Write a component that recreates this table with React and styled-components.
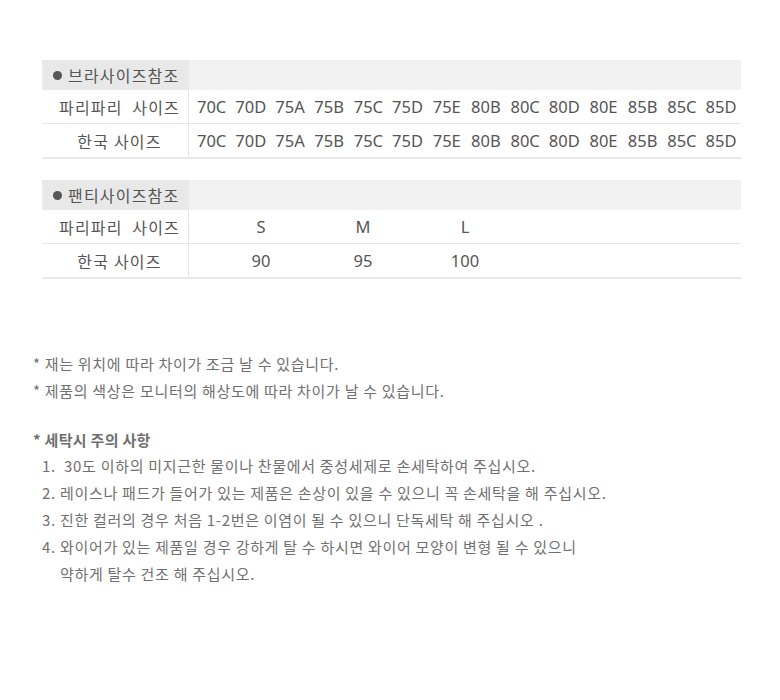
import React from "react";
import styled, { createGlobalStyle } from "styled-components";

const GlobalStyle = createGlobalStyle`
  html, body { margin: 0; padding: 0; background: #ffffff; }
  body { font-family: "Noto Sans CJK KR", "Noto Sans", sans-serif; color: #555; }
`;

const Page = styled.div`
  width: 780px;
  height: 700px;
  box-sizing: border-box;
  padding: 60px 39px 0 42px;
`;

const Table = styled.div`
  width: 699px;
  display: flex;
  flex-direction: column;
  margin-bottom: ${(p) => p.$gap || 0}px;
`;

const HeaderRow = styled.div`
  display: grid;
  grid-template-columns: 147px 1fr;
  height: 30px;
`;

const HeaderLabel = styled.div`
  background: #e8e8e8;
  display: flex;
  align-items: center;
  padding-left: 11px;
  font-size: 16px;
  letter-spacing: 1.2px;
  color: #555;
  white-space: pre;
`;

const Dot = styled.span`
  display: inline-block;
  width: 9px;
  height: 9px;
  border-radius: 50%;
  background: #555;
  margin-right: 6px;
`;

const HeaderFill = styled.div`
  background: #f1f1f1;
`;

const Row = styled.div`
  display: grid;
  grid-template-columns: 147px 1fr;
  height: 33px;
  border-bottom: ${(p) => (p.$last ? "2px solid #e9e9e9" : "1px solid #e6e6e6")};
`;

const Label = styled.div`
  display: flex;
  align-items: center;
  justify-content: center;
  padding-left: 9px;
  font-size: 16px;
  letter-spacing: 1.2px;
  color: #555;
  white-space: pre;
  border-right: 1px solid #e4e4e4;
`;

const Cells = styled.div`
  display: grid;
  grid-template-columns: repeat(${(p) => p.$count}, ${(p) => p.$cell});
  padding-left: ${(p) => p.$pad}px;
  align-items: center;
`;

const Cell = styled.div`
  text-align: center;
  font-family: "Noto Sans", "Noto Sans CJK KR", sans-serif;
  font-size: 16.5px;
  color: #555;
  white-space: nowrap;
`;

const Notes = styled.div`
  margin-top: 71px;
  margin-left: -9px;
  font-size: 15px;
  letter-spacing: 0.7px;
  line-height: 27px;
  color: #707070;
  white-space: pre;
`;

const NoteLine = styled.div``;

const Title = styled.div`
  margin-top: 23px;
  line-height: 25px;
  font-weight: 700;
  letter-spacing: 0.3px;
  color: #707070;
`;

const Item = styled.div`
  padding-left: ${(p) => (p.$cont ? 27 : 9)}px;
`;

const braSizes = ["70C", "70D", "75A", "75B", "75C", "75D", "75E", "80B", "80C", "80D", "80E", "85B", "85C", "85D"];

function SizeTable({ title, rows, count, cell, pad, gap }) {
  return (
    <Table $gap={gap}>
      <HeaderRow>
        <HeaderLabel>
          <Dot />
          {title}
        </HeaderLabel>
        <HeaderFill />
      </HeaderRow>
      {rows.map((r, i) => (
        <Row key={r.label} $last={i === rows.length - 1}>
          <Label>{r.label}</Label>
          <Cells $count={count} $cell={cell} $pad={pad}>
            {r.values.map((v, j) => (
              <Cell key={j}>{v}</Cell>
            ))}
          </Cells>
        </Row>
      ))}
    </Table>
  );
}

export default function App() {
  return (
    <>
      <GlobalStyle />
      <Page>
        <SizeTable
          title="브라사이즈참조"
          count={14}
          cell="39.2px"
          pad={3}
          gap={21}
          rows={[
            { label: "파리파리  사이즈", values: braSizes },
            { label: "한국 사이즈", values: braSizes },
          ]}
        />
        <SizeTable
          title="팬티사이즈참조"
          count={3}
          cell="102px"
          pad={21}
          rows={[
            { label: "파리파리  사이즈", values: ["S", "M", "L"] },
            { label: "한국 사이즈", values: ["90", "95", "100"] },
          ]}
        />
        <Notes>
          <NoteLine>* 재는 위치에 따라 차이가 조금 날 수 있습니다.</NoteLine>
          <NoteLine>* 제품의 색상은 모니터의 해상도에 따라 차이가 날 수 있습니다.</NoteLine>
          <Title>* 세탁시 주의 사항</Title>
          <Item>1.  30도 이하의 미지근한 물이나 찬물에서 중성세제로 손세탁하여 주십시오.</Item>
          <Item>2. 레이스나 패드가 들어가 있는 제품은 손상이 있을 수 있으니 꼭 손세탁을 해 주십시오.</Item>
          <Item>3. 진한 컬러의 경우 처음 1-2번은 이염이 될 수 있으니 단독세탁 해 주십시오 .</Item>
          <Item>4. 와이어가 있는 제품일 경우 강하게 탈 수 하시면 와이어 모양이 변형 될 수 있으니</Item>
          <Item $cont>약하게 탈수 건조 해 주십시오.</Item>
        </Notes>
      </Page>
    </>
  );
}
